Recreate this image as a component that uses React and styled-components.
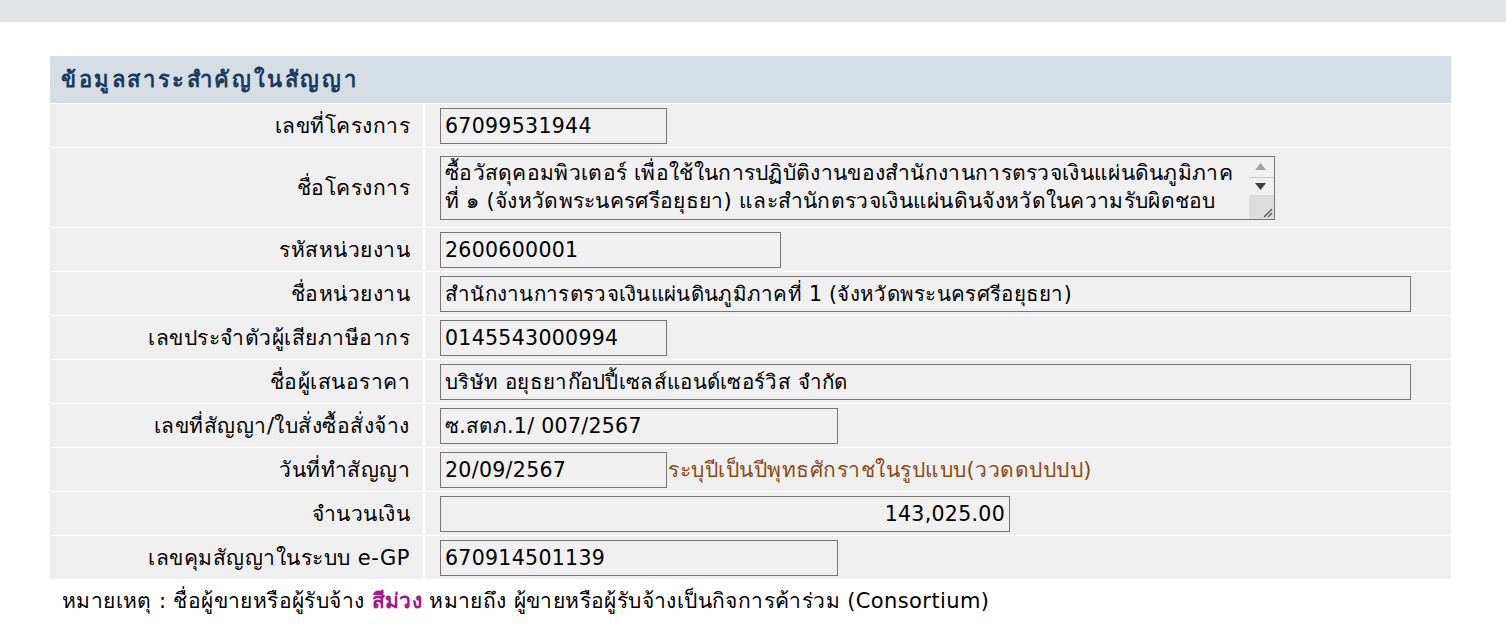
import React from "react";
import styled, { createGlobalStyle } from "styled-components";

const GlobalStyle = createGlobalStyle`
  html, body {
    margin: 0;
    padding: 0;
    background: #ffffff;
    font-family: "DejaVu Sans", "Noto Sans", sans-serif;
    color: #000;
  }
`;

const TopBar = styled.div`
  height: 22px;
  background: #e1e3e6;
`;

const Page = styled.div`
  padding: 34px 55px 0 50px;
`;

const Table = styled.div`
  width: 1401px;
  background: #efefef;
`;

const Header = styled.div`
  height: 47px;
  display: flex;
  align-items: center;
  padding-left: 11px;
  background: #d5dde5;
  color: #1b3a5c;
  font-weight: bold;
  font-size: 22px;
  letter-spacing: 2.6px;
  border-bottom: 1px solid #fff;
`;

const Row = styled.div`
  display: grid;
  grid-template-columns: 375px 1fr;
  min-height: ${({ $tall }) => ($tall ? 79 : 43)}px;
  border-bottom: 1px solid #ffffff;
`;

const Label = styled.div`
  display: flex;
  align-items: center;
  justify-content: flex-end;
  padding-right: 13px;
  font-size: 21px;
  letter-spacing: 0.5px;
  border-right: 2px solid #ffffff;
`;

const Value = styled.div`
  display: flex;
  align-items: center;
  padding-left: 15px;
`;

const Field = styled.div`
  box-sizing: border-box;
  width: ${({ $w }) => $w}px;
  height: 36px;
  border: 1px solid #767676;
  background: #f0f0f0;
  font-size: 20.5px;
  letter-spacing: 0.3px;
  line-height: 34px;
  padding: 0 4px;
  text-align: ${({ $right }) => ($right ? "right" : "left")};
  white-space: nowrap;
  overflow: hidden;
`;

const AreaBox = styled.div`
  box-sizing: border-box;
  width: 835px;
  height: 64px;
  border: 1px solid #767676;
  background: #f0f0f0;
  display: flex;
  overflow: hidden;
`;

const Area = styled.textarea`
  flex: 1;
  border: none;
  outline: none;
  background: transparent;
  font-family: inherit;
  font-size: 21px;
  letter-spacing: 0.3px;
  line-height: 28px;
  padding: 2px 14px 0 4px;
  margin: 0;
  resize: none;
  overflow: hidden;
  color: #000;
`;

const ScrollCol = styled.div`
  width: 25px;
  display: flex;
  flex-direction: column;
`;

const ScrollBtn = styled.div`
  height: ${({ $h }) => $h}px;
  display: flex;
  align-items: center;
  justify-content: center;
  padding-right: 2px;
  border-bottom: ${({ $line }) => ($line ? "1px solid #c6c6c6" : "none")};
`;

const Grip = styled.div`
  flex: 1;
  background: #dcdcdc;
  display: flex;
  align-items: flex-end;
  justify-content: flex-end;
  padding: 0 1px 1px 0;
`;

const Hint = styled.span`
  font-size: 21px;
  letter-spacing: 0.5px;
  color: #8b4a14;
  margin-left: 1px;
`;

const Note = styled.div`
  padding: 4px 0 0 12px;
  font-size: 21px;
  letter-spacing: 0.4px;
`;

const Purple = styled.span`
  color: #a0178f;
  font-weight: bold;
`;

const rows = [
  { label: "เลขที่โครงการ", value: "67099531944", w: 227 },
  { label: "ชื่อโครงการ", area: true },
  { label: "รหัสหน่วยงาน", value: "2600600001", w: 341 },
  { label: "ชื่อหน่วยงาน", value: "สำนักงานการตรวจเงินแผ่นดินภูมิภาคที่ 1 (จังหวัดพระนครศรีอยุธยา)", w: 971 },
  { label: "เลขประจำตัวผู้เสียภาษีอากร", value: "0145543000994", w: 227 },
  { label: "ชื่อผู้เสนอราคา", value: "บริษัท อยุธยาก๊อปปี้เซลส์แอนด์เซอร์วิส จำกัด", w: 971 },
  { label: "เลขที่สัญญา/ใบสั่งซื้อสั่งจ้าง", value: "ซ.สตภ.1/ 007/2567", w: 398 },
  { label: "วันที่ทำสัญญา", value: "20/09/2567", w: 227, hint: "ระบุปีเป็นปีพุทธศักราชในรูปแบบ(ววดดปปปป)" },
  { label: "จำนวนเงิน", value: "143,025.00", w: 570, right: true },
  { label: "เลขคุมสัญญาในระบบ e-GP", value: "670914501139", w: 398 },
];

const projectName =
  "ซื้อวัสดุคอมพิวเตอร์ เพื่อใช้ในการปฏิบัติงานของสำนักงานการตรวจเงินแผ่นดินภูมิภาค ที่ ๑ (จังหวัดพระนครศรีอยุธยา) และสำนักตรวจเงินแผ่นดินจังหวัดในความรับผิดชอบ ๖ จังหวัด";

const ProjectArea = () => (
  <AreaBox>
    <Area readOnly rows={2} defaultValue={projectName} />
    <ScrollCol>
      <ScrollBtn $h={20} $line>
        <svg width="11" height="7" viewBox="0 0 11 7">
          <path d="M5.5 0 L11 7 L0 7 Z" fill="#a3a3a3" />
        </svg>
      </ScrollBtn>
      <ScrollBtn $h={17}>
        <svg width="11" height="7" viewBox="0 0 11 7">
          <path d="M0 0 L11 0 L5.5 7 Z" fill="#404040" />
        </svg>
      </ScrollBtn>
      <Grip>
        <svg width="12" height="12" viewBox="0 0 12 12">
          <path d="M11 3 L3 11 M11 7 L7 11" stroke="#555" strokeWidth="1.3" />
        </svg>
      </Grip>
    </ScrollCol>
  </AreaBox>
);

export default function App() {
  return (
    <>
      <GlobalStyle />
      <TopBar />
      <Page>
        <Table>
          <Header>ข้อมูลสาระสำคัญในสัญญา</Header>
          {rows.map((r) => (
            <Row key={r.label} $tall={r.area}>
              <Label>{r.label}</Label>
              <Value>
                {r.area ? (
                  <ProjectArea />
                ) : (
                  <Field $w={r.w} $right={r.right}>
                    {r.value}
                  </Field>
                )}
                {r.hint && <Hint>{r.hint}</Hint>}
              </Value>
            </Row>
          ))}
        </Table>
        <Note>
          หมายเหตุ : ชื่อผู้ขายหรือผู้รับจ้าง <Purple>สีม่วง</Purple> หมายถึง
          ผู้ขายหรือผู้รับจ้างเป็นกิจการค้าร่วม (Consortium)
        </Note>
      </Page>
    </>
  );
}
